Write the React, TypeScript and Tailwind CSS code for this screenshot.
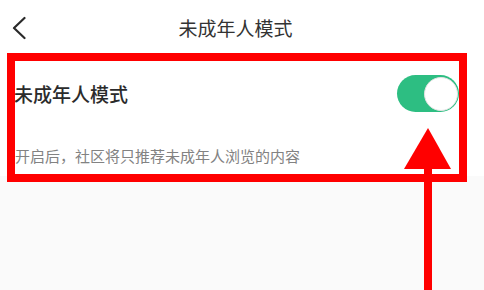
import { type ReactNode } from 'react'

const font = { fontFamily: '"Noto Sans CJK SC", "Noto Sans", sans-serif' }

const BackIcon = () => (
  <svg width="14" height="24" viewBox="0 0 14 24" fill="none">
    <path
      d="M12.5 2 L2 12 L12.5 22"
      stroke="#2a2a2a"
      strokeWidth="2.2"
      strokeLinecap="round"
      strokeLinejoin="round"
    />
  </svg>
)

const Toggle = ({ on }: { on: boolean }) => (
  <div
    className={`flex h-[37px] w-[62px] items-center rounded-full p-[1.5px] ${
      on ? 'justify-end bg-[#2dbe82]' : 'justify-start bg-[#e5e5e5]'
    }`}
  >
    <div className="h-[34px] w-[34px] rounded-full border border-[#e2e2e2] bg-white" />
  </div>
)

const Annotation = ({ children }: { children: ReactNode }) => (
  <div className="pointer-events-none absolute inset-0">{children}</div>
)

export default function App() {
  return (
    <div
      className="relative h-[290px] w-[484px] overflow-hidden bg-[#fafafa]"
      style={font}
    >
      <header className="flex h-[56px] items-center bg-white pl-[12px] pr-[39px]">
        <BackIcon />
        <h1 className="flex-1 text-center text-[19px] font-normal text-[#333]">
          未成年人模式
        </h1>
      </header>

      <section className="bg-white pb-[10px]">
        <div className="flex items-center justify-between pl-[14px] pr-[25px] pt-[19px]">
          <span className="text-[19px] font-medium leading-[37px] text-[#2b2b2b]">
            未成年人模式
          </span>
          <Toggle on />
        </div>
        <p className="mt-[34px] pl-[15px] text-[15px] leading-[20px] text-[#828282]">
          开启后，社区将只推荐未成年人浏览的内容
        </p>
      </section>

      <Annotation>
        <div className="absolute left-[7px] top-[53px] h-[129px] w-[460px] border-[8px] border-[#ff0000]" />
        <svg
          className="absolute left-[403px] top-[126px]"
          width="50"
          height="164"
          viewBox="0 0 50 164"
        >
          <polygon points="25,2 1,43 48,43" fill="#ff0000" />
          <rect x="21" y="42" width="8" height="122" fill="#ff0000" />
        </svg>
      </Annotation>
    </div>
  )
}
